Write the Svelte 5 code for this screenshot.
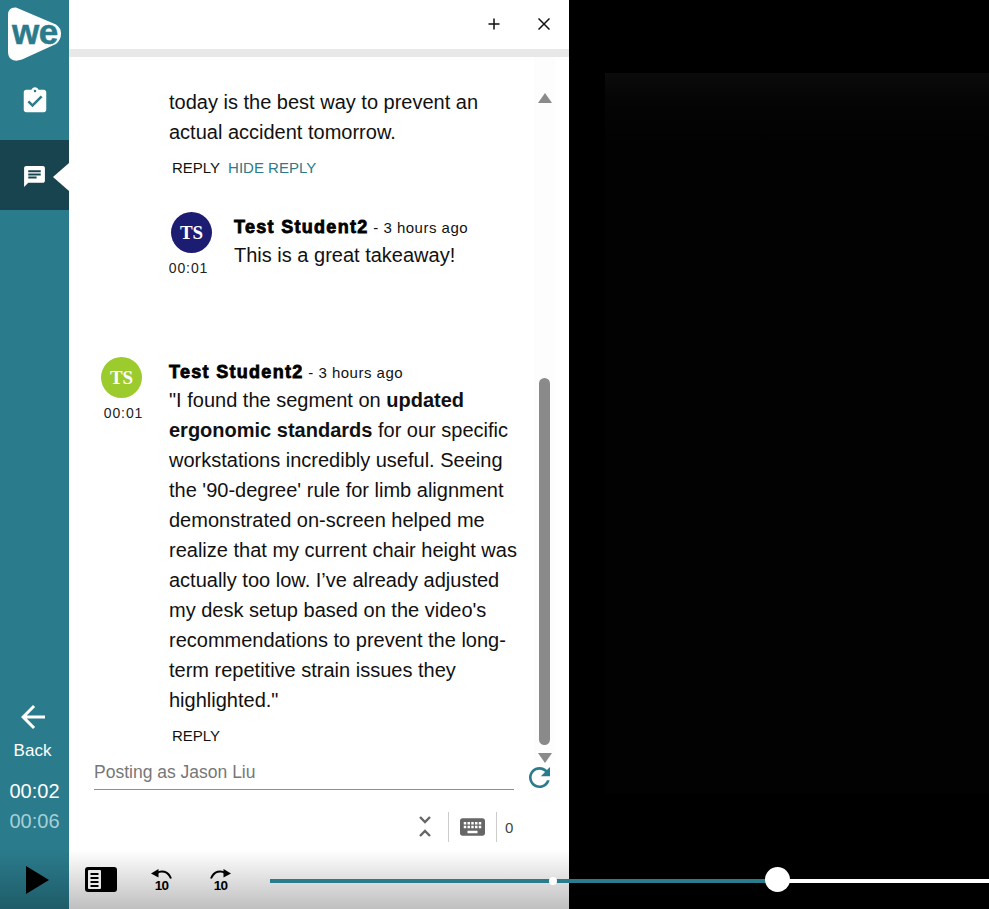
<script>
  let comment = {
    name: 'Test Student2',
    when: '3 hours ago',
    time: '00:01'
  };
</script>

<div class="player">
  <nav class="sidebar">
    <div class="logo">
      <svg viewBox="0 0 53 54" width="53" height="54">
        <path d="M0 8 Q0 0 8 0.5 L48 17.5 Q53 21 53 26.5 Q53 33 48 37 L14 52.5 Q7 55 3 52 Q0 50 0 44 Z" fill="#fff" />
        <text x="4" y="36.5" class="we">we</text>
      </svg>
    </div>
    <div class="nav-item">
      <svg viewBox="0 0 24 24" width="30" height="30" fill="#fff"><path d="M19 3h-4.18C14.4 1.84 13.3 1 12 1c-1.3 0-2.4.84-2.82 2H5c-1.1 0-2 .9-2 2v14c0 1.1.9 2 2 2h14c1.1 0 2-.9 2-2V5c0-1.1-.9-2-2-2zm-7 0c.55 0 1 .45 1 1s-.45 1-1 1-1-.45-1-1 .45-1 1-1zm-2 14l-4-4 1.41-1.41L10 14.17l6.59-6.59L18 9l-8 8z" /></svg>
    </div>
    <div class="nav-item active">
      <svg viewBox="0 0 24 24" width="25" height="25" fill="#fff"><path d="M20 2H4c-1.1 0-1.99.9-1.99 2L2 22l4-4h14c1.1 0 2-.9 2-2V4c0-1.1-.9-2-2-2zM6 9h12v2H6V9zm8 5H6v-2h8v2zm4-6H6V6h12v2z" /></svg>
    </div>
    <div class="spacer"></div>
    <div class="back">
      <svg viewBox="0 0 24 24" width="36" height="36" fill="#fff"><path d="M20 11H7.83l5.59-5.59L12 4l-8 8 8 8 1.41-1.41L7.83 13H20v-2z" /></svg>
      <span>Back</span>
    </div>
    <div class="elapsed">00:02</div>
    <div class="total">00:06</div>
  </nav>

  <section class="panel">
    <header class="panel-head">
      <svg viewBox="0 0 12 12" width="12" height="12" stroke="#111" stroke-width="1.5"><path d="M6 0.5v11M0.5 6h11" /></svg>
      <svg viewBox="0 0 12 12" width="12" height="12" stroke="#111" stroke-width="1.5"><path d="M0.5 0.5l11 11M11.5 0.5l-11 11" /></svg>
    </header>
    <div class="head-rule"></div>

    <div class="thread">
      <div class="comments">
        <p class="body first">today is the best way to prevent an actual accident tomorrow.</p>
        <div class="actions">
          <span>REPLY</span>
          <span class="teal">HIDE REPLY</span>
        </div>

        <div class="comment nested">
          <div class="who">
            <div class="avatar navy">TS</div>
            <div class="stamp">{comment.time}</div>
          </div>
          <div class="text">
            <div class="meta"><b>{comment.name}</b> - {comment.when}</div>
            <p class="short">This is a great takeaway!</p>
          </div>
        </div>

        <div class="comment top">
          <div class="who">
            <div class="avatar green">TS</div>
            <div class="stamp">{comment.time}</div>
          </div>
          <div class="text">
            <div class="meta"><b>{comment.name}</b> - {comment.when}</div>
            <p class="body">"I found the segment on <strong>updated ergonomic standards</strong> for our specific workstations incredibly useful. Seeing the '90-degree' rule for limb alignment demonstrated on-screen helped me realize that my current chair height was actually too low. I’ve already adjusted my desk setup based on the video's recommendations to prevent the long-term repetitive strain issues they highlighted."</p>
            <div class="actions"><span>REPLY</span></div>
          </div>
        </div>
      </div>

      <div class="scrollbar">
        <i class="arrow up"></i>
        <div class="track"><div class="thumb"></div></div>
        <i class="arrow down"></i>
      </div>
    </div>

    <div class="composer">
      <div class="input">Posting as Jason Liu</div>
      <svg class="refresh" viewBox="4 4 16 16" width="21" height="21" fill="#2a7b8c"><path d="M17.65 6.35C16.2 4.9 14.21 4 12 4c-4.42 0-7.99 3.58-7.99 8s3.57 8 7.99 8c3.73 0 6.84-2.55 7.73-6h-2.08c-.82 2.33-3.04 4-5.65 4-3.31 0-6-2.69-6-6s2.69-6 6-6c1.66 0 3.14.69 4.22 1.78L13 11h7V4l-2.35 2.35z" /></svg>
    </div>

    <div class="tools">
      <svg viewBox="0 0 14 24" width="14" height="24" fill="none" stroke="#666" stroke-width="2.4"><path d="M2 2l5 5 5-5M2 21l5-5 5 5" /></svg>
      <div class="divider"></div>
      <svg class="keys" viewBox="2 5 20 14" width="25" height="18" fill="#666"><path d="M20 5H4c-1.1 0-1.99.9-1.99 2L2 17c0 1.1.9 2 2 2h16c1.1 0 2-.9 2-2V7c0-1.1-.9-2-2-2zm-9 3h2v2h-2V8zm0 3h2v2h-2v-2zM8 8h2v2H8V8zm0 3h2v2H8v-2zm-1 2H5v-2h2v2zm0-3H5V8h2v2zm9 7H8v-2h8v2zm0-4h-2v-2h2v2zm0-3h-2V8h2v2zm3 3h-2v-2h2v2zm0-3h-2V8h2v2z" /></svg>
      <div class="divider"></div>
      <span class="count">0</span>
    </div>
  </section>

  <main class="stage">
    <div class="video"></div>
  </main>

  <div class="controls">
    <svg class="play" viewBox="0 0 23 28" width="23" height="28" fill="#000"><path d="M0 0l23 14L0 28z" /></svg>
    <svg class="transcript" viewBox="0 0 32 25" width="32" height="25">
      <rect width="32" height="25" rx="3" fill="#000" />
      <rect x="3" y="3" width="13" height="19" rx="1" fill="#e8e8e8" />
      <path d="M5.5 7h8M5.5 11h8M5.5 15h8M5.5 19h8" stroke="#000" stroke-width="2" />
    </svg>
    <div class="skip">
      <svg viewBox="0 0 21 10" width="21" height="10" fill="none" stroke="#000" stroke-width="2"><path d="M6 4C10 1 17 2 20 9.5" /><path d="M0 4.5L7.5 0v8.5z" fill="#000" stroke="none" /></svg>
      <span>10</span>
    </div>
    <div class="skip fwd">
      <svg viewBox="0 0 21 10" width="21" height="10" fill="none" stroke="#000" stroke-width="2"><path d="M15 4C11 1 4 2 1 9.5" /><path d="M21 4.5L13.5 0v8.5z" fill="#000" stroke="none" /></svg>
      <span>10</span>
    </div>
    <div class="slider">
      <div class="played"></div>
      <div class="rest"></div>
      <i class="marker"></i>
      <i class="knob"></i>
    </div>
  </div>
</div>

<style>
  :global(body) {
    margin: 0;
    background: #000;
  }

  .player {
    position: relative;
    display: flex;
    width: 989px;
    height: 909px;
    overflow: hidden;
    font-family: "Liberation Sans", Arial, sans-serif;
    color: #111;
  }

  .sidebar {
    width: 69px;
    flex: none;
    display: flex;
    flex-direction: column;
    align-items: stretch;
    background: #2a7b8c;
    color: #fff;
  }

  .logo {
    height: 70px;
    padding: 7px 0 0 8px;
    box-sizing: border-box;
  }

  .we {
    font-size: 35px;
    font-weight: 700;
    fill: #2a7b8c;
    stroke: #2a7b8c;
    stroke-width: 0.5px;
    font-family: "Liberation Sans", Arial, sans-serif;
    letter-spacing: -0.5px;
  }

  .nav-item {
    height: 70px;
    display: flex;
    align-items: center;
    justify-content: center;
    position: relative;
    padding-bottom: 8px;
    box-sizing: border-box;
  }

  .nav-item.active {
    padding: 2px 0 0;
    background: #17444f;
  }

  .nav-item.active::after {
    content: "";
    position: absolute;
    right: 0;
    top: 23px;
    border-left: 0;
    border-right: 16px solid #fff;
    border-top: 14px solid transparent;
    border-bottom: 14px solid transparent;
  }

  .spacer {
    flex: 1;
  }

  .back {
    display: flex;
    flex-direction: column;
    align-items: center;
    font-size: 17px;
    line-height: 18px;
    padding-right: 4px;
    gap: 7px;
  }

  .elapsed {
    margin-top: 16px;
    text-align: center;
    font-size: 20px;
    line-height: 30px;
  }

  .total {
    text-align: center;
    font-size: 20px;
    line-height: 30px;
    color: #a5d0d8;
    margin-bottom: 73px;
  }

  .panel {
    width: 500px;
    flex: none;
    background: #fff;
    display: flex;
    flex-direction: column;
  }

  .panel-head {
    height: 49px;
    flex: none;
    display: flex;
    align-items: center;
    justify-content: flex-end;
    gap: 38px;
    padding: 0 19px 2px 0;
    box-sizing: border-box;
  }

  .head-rule {
    height: 8px;
    flex: none;
    background: #e8e8e8;
  }

  .thread {
    height: 706px;
    flex: none;
    display: flex;
    overflow: hidden;
  }

  .comments {
    flex: 1;
    min-width: 0;
    padding: 30px 0 0 32px;
    box-sizing: border-box;
  }

  .body {
    margin: 0;
    font-size: 20px;
    line-height: 30px;
    width: 350px;
  }

  .text .body {
    margin-top: 2px;
  }

  .first {
    margin-left: 68px;
  }

  .actions {
    display: flex;
    gap: 8px;
    font-size: 15px;
    line-height: 20px;
    padding: 11px 0 0 3px;
  }

  .comments > .actions {
    margin-left: 68px;
  }

  .teal {
    color: #2a7b8c;
  }

  .comment {
    display: flex;
  }

  .nested {
    margin: 34px 0 0 70px;
    gap: 22px;
    min-height: 145px;
  }

  .top {
    gap: 27px;
  }

  .who {
    width: 41px;
    flex: none;
    display: flex;
    flex-direction: column;
    align-items: center;
  }

  .avatar {
    width: 41px;
    height: 41px;
    border-radius: 50%;
    display: flex;
    align-items: center;
    justify-content: center;
    color: #fff;
    font-family: "Liberation Serif", serif;
    font-weight: 700;
    font-size: 19px;
    flex: none;
  }

  .navy {
    background: #1c1c72;
  }

  .green {
    background: #9bcb2d;
  }

  .stamp {
    font-size: 14px;
    letter-spacing: 0.9px;
    line-height: 18px;
    margin-top: 6px;
    white-space: nowrap;
    color: #222;
  }

  .nested .stamp {
    margin-right: 6px;
  }

  .top .stamp {
    margin-left: 4px;
  }

  .text {
    flex: 1;
    min-width: 0;
  }

  .meta {
    font-size: 15px;
    letter-spacing: 0.5px;
    line-height: 20px;
    margin-top: 5px;
  }

  .meta b {
    font-size: 18px;
    letter-spacing: 1.3px;
    color: #000;
    -webkit-text-stroke: 0.8px #000;
  }

  .short {
    margin: 5px 0 0;
    font-size: 20px;
    line-height: 24px;
  }

  .scrollbar {
    width: 21px;
    flex: none;
    display: flex;
    flex-direction: column;
    align-items: center;
    padding-top: 36px;
    box-sizing: border-box;
    margin-right: 14px;
    background: #fdfdfd;
  }

  .arrow {
    width: 0;
    height: 0;
    border-left: 7px solid transparent;
    border-right: 7px solid transparent;
    flex: none;
  }

  .up {
    border-bottom: 10px solid #8a8a8a;
  }

  .down {
    border-top: 10px solid #8a8a8a;
    margin-top: 8px;
  }

  .track {
    height: 642px;
    width: 11px;
    flex: none;
    display: flex;
    align-items: flex-end;
  }

  .thumb {
    width: 11px;
    height: 367px;
    border-radius: 6px;
    background: #8a8a8a;
  }

  .composer {
    display: flex;
    align-items: flex-end;
    gap: 15px;
    padding-left: 25px;
    height: 27px;
    flex: none;
  }

  .input {
    width: 420px;
    height: 27px;
    box-sizing: border-box;
    border-bottom: 1px solid #8f8f8f;
    color: #777;
    font-size: 17.5px;
    line-height: 18px;
  }

  .refresh {
    margin-bottom: 2px;
  }

  .tools {
    display: flex;
    align-items: center;
    margin-top: 22px;
    height: 30px;
    padding-left: 349px;
  }

  .divider {
    width: 1px;
    height: 30px;
    background: #ccc;
  }

  .tools svg:first-child {
    margin-right: 16px;
  }

  .keys {
    margin: 0 11px;
  }

  .count {
    margin-left: 8px;
    font-size: 15px;
    color: #444;
  }

  .stage {
    flex: 1;
    background: #000;
    padding: 73px 0 115px 36px;
    display: flex;
  }

  .video {
    flex: 1;
    background: linear-gradient(#0b0b0b, #050505 25px, #020202 70px);
  }

  .controls {
    position: absolute;
    left: 0;
    right: 0;
    bottom: 0;
    height: 59px;
    display: flex;
    align-items: center;
    background: linear-gradient(rgba(0, 0, 0, 0), rgba(0, 0, 0, 0.25));
  }

  .play {
    margin-left: 26px;
  }

  .transcript {
    margin-left: 36px;
  }

  .skip {
    width: 21px;
    margin-left: 34px;
    display: flex;
    flex-direction: column;
    align-items: center;
    color: #000;
  }

  .skip.fwd {
    margin-left: 38px;
  }

  .skip span {
    font-size: 13.5px;
    line-height: 11px;
    margin-top: 1px;
    letter-spacing: -0.8px;
    font-weight: 700;
  }

  .slider {
    position: relative;
    flex: 1;
    margin: 2px 0 0 39px;
    height: 4px;
    display: flex;
  }

  .played {
    width: 507px;
    background: #2a7b8c;
  }

  .rest {
    flex: 1;
    background: #fff;
  }

  .marker {
    position: absolute;
    left: 279px;
    top: -2px;
    width: 8px;
    height: 8px;
    border-radius: 50%;
    background: #fff;
  }

  .knob {
    position: absolute;
    left: 495px;
    top: -12px;
    width: 25px;
    height: 25px;
    border-radius: 50%;
    background: #fff;
  }
</style>
